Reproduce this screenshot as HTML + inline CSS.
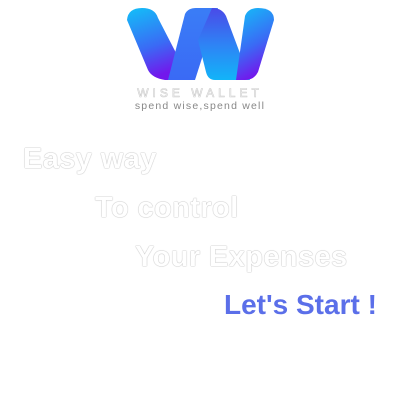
<!DOCTYPE html>
<html><head><meta charset="utf-8"><style>
html,body{margin:0;padding:0;background:#fff;width:400px;height:400px;overflow:hidden;position:relative;font-family:"Liberation Sans",sans-serif}
.t{position:absolute;font-weight:bold;font-size:29px;color:#fff;letter-spacing:0.4px;white-space:nowrap;
text-shadow:0 0 1px #aaa,0 0 1px #bbb}
.s{position:absolute;font-weight:bold;font-size:28px;color:#5b6fe9;white-space:nowrap;letter-spacing:0px}
</style></head><body>
<svg width="400" height="120" style="position:absolute;left:0;top:0">
<defs>
<linearGradient id="g1" x1="0" y1="0" x2="0.3" y2="1"><stop offset="0" stop-color="#12c0f8"/><stop offset="0.6" stop-color="#3a6af5"/><stop offset="1" stop-color="#7218ec"/></linearGradient>
<linearGradient id="g2" x1="0" y1="0" x2="0" y2="1"><stop offset="0" stop-color="#3a7df6"/><stop offset="1" stop-color="#3a6af5"/></linearGradient>
<linearGradient id="g3" x1="0" y1="0" x2="0" y2="1"><stop offset="0" stop-color="#4a4ae8"/><stop offset="0.5" stop-color="#2f82f5"/><stop offset="1" stop-color="#12b4f8"/></linearGradient>
</defs>
<path d="M127,20 Q128,8 142,8 Q155,8 158,18 L190,80 L165,80 Q152,78 148,70 Z" fill="url(#g1)"/>
<path d="M168,80 L185,14 Q188,8 196,8 L218,8 L195,80 Z" fill="url(#g2)"/>
<path d="M212,8 Q222,8 226,16 L250,80 L215,80 Q208,80 206,72 L198,40 Z" fill="url(#g3)"/>
<path d="M236,80 L245,16 Q248,8 258,8 Q274,8 274,20 L258,72 Q254,80 245,80 Z" fill="url(#g1)"/>
<text x="200" y="97" text-anchor="middle" font-family="Liberation Sans" font-size="12" fill="#fff" stroke="#ccc" stroke-width="0.6" letter-spacing="4">WISE WALLET</text>
<text x="200" y="109" text-anchor="middle" font-family="Liberation Sans" font-size="10.5" fill="#888" letter-spacing="1.2">spend wise,spend well</text>
</svg>
<div class="t" style="left:23px;top:143px">Easy way</div>
<div class="t" style="left:95px;top:192px">To control</div>
<div class="t" style="left:135px;top:241px">Your Expenses</div>
<div class="s" style="left:224px;top:289px">Let's Start !</div>
</body></html>
